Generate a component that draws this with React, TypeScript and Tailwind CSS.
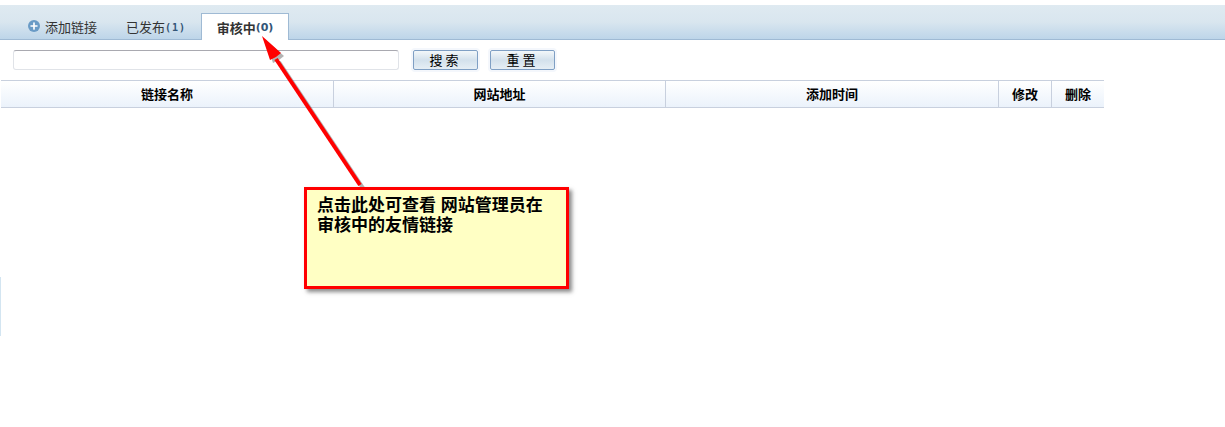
import { Plus } from "lucide-react";

const FONT = "font-['Liberation_Sans','Noto_Sans_CJK_SC',sans-serif]";

const columns = [
  { label: "链接名称", width: "w-[333px]" },
  { label: "网站地址", width: "w-[332px]" },
  { label: "添加时间", width: "w-[333px]" },
  { label: "修改", width: "w-[53px]" },
  { label: "删除", width: "w-[52px]" },
];

function Tabs() {
  return (
    <div className="mt-[5px] flex h-[35px] items-end border-b border-[#9fbad4] bg-gradient-to-b from-[#dfeaf1] via-[#d9e6ef] to-[#bdd5e9] pl-[28px]">
      <div className="flex h-[26px] w-[86px] items-center pt-[3px] text-[13px] text-[#333]">
        <span className="relative -top-[2px] mr-[5px] flex h-3 w-3 shrink-0 items-center justify-center rounded-full bg-[#6a9bc6]">
          <Plus size={10} strokeWidth={4} className="text-white" />
        </span>
        添加链接
      </div>
      <div className="ml-3 flex h-[26px] w-[75px] items-center pt-[3px] text-[13px] text-[#333]">
        已发布
        <span className="font-['DejaVu_Sans_Mono',monospace] text-[10px] font-bold tracking-[1px] text-[#335577]">(1)</span>
      </div>
      <div className="relative top-px flex h-[27px] w-[88px] items-center justify-center border border-b-0 border-[#9fbad4] bg-white pt-[3px] text-[13px] font-bold text-[#333]">
        审核中
        <span className="font-['DejaVu_Sans',sans-serif] text-[11px] font-bold text-[#335577]">(0)</span>
      </div>
    </div>
  );
}

function SearchBar() {
  return (
    <div className="mt-[10px] flex h-5 pl-[13px]">
      <input
        readOnly
        className="h-5 w-[386px] rounded-[3px] border border-[#e0e3e8] border-t-[#a9a9b0] bg-white"
      />
      <button className="ml-[14px] h-5 w-[65px] rounded-[2px] border border-[#7f9fc4] bg-gradient-to-b from-[#f3f7fa] via-[#d3e1ec] to-[#e6eef5] pt-px text-[13px] leading-none tracking-[3px] text-black shadow-[0_0_0_2px_#f4f7fc]">
        搜索
      </button>
      <button className="ml-3 h-5 w-[65px] rounded-[2px] border border-[#7f9fc4] bg-gradient-to-b from-[#f3f7fa] via-[#d3e1ec] to-[#e6eef5] pt-px text-[13px] leading-none tracking-[3px] text-black shadow-[0_0_0_2px_#f4f7fc]">
        重置
      </button>
    </div>
  );
}

function TableHead() {
  return (
    <div className="ml-px mt-[10px] flex h-7 w-[1103px] border-y border-[#c8d0de] bg-gradient-to-b from-white to-[#ebf2fb]">
      {columns.map((col, i) => (
        <div
          key={col.label}
          className={`${col.width} flex items-center justify-center pt-[2px] text-[13px] font-bold text-black ${
            i < columns.length - 1 ? "border-r border-[#c8d0de]" : ""
          }`}
        >
          {col.label}
        </div>
      ))}
    </div>
  );
}

function Arrow() {
  return (
    <svg className="absolute left-[255px] top-[35px] h-[160px] w-[120px]" viewBox="0 0 120 160" fill="none">
      <g opacity="0.4" transform="translate(3 3)">
        <path d="M105 150 L21 24" stroke="#444" strokeWidth="4" />
        <path d="M7 1 L26 18 L21 22 L15 25 Z" fill="#444" />
      </g>
      <path d="M105 150 L21 24" stroke="#ff0000" strokeWidth="4" />
      <path d="M7 1 L26 18 L21 22 L15 25 Z" fill="#ff0000" />
    </svg>
  );
}

export default function App() {
  return (
    <div className={`relative h-[427px] w-[1225px] overflow-hidden bg-white ${FONT}`}>
      <Tabs />
      <SearchBar />
      <TableHead />
      <div className="absolute left-0 top-[277px] h-[59px] w-px bg-[#d3e5f1]" />
      <Arrow />
      <div className="absolute left-[304px] top-[187px] h-[102px] w-[265px] border-[3px] border-[#ff0000] bg-[#ffffc4] pl-[10px] pt-[6px] text-[17px] font-bold leading-[20px] text-black shadow-[3px_3px_4px_rgba(60,60,60,0.6)]">
        点击此处可查看 网站管理员在
        <br />
        审核中的友情链接
      </div>
    </div>
  );
}
